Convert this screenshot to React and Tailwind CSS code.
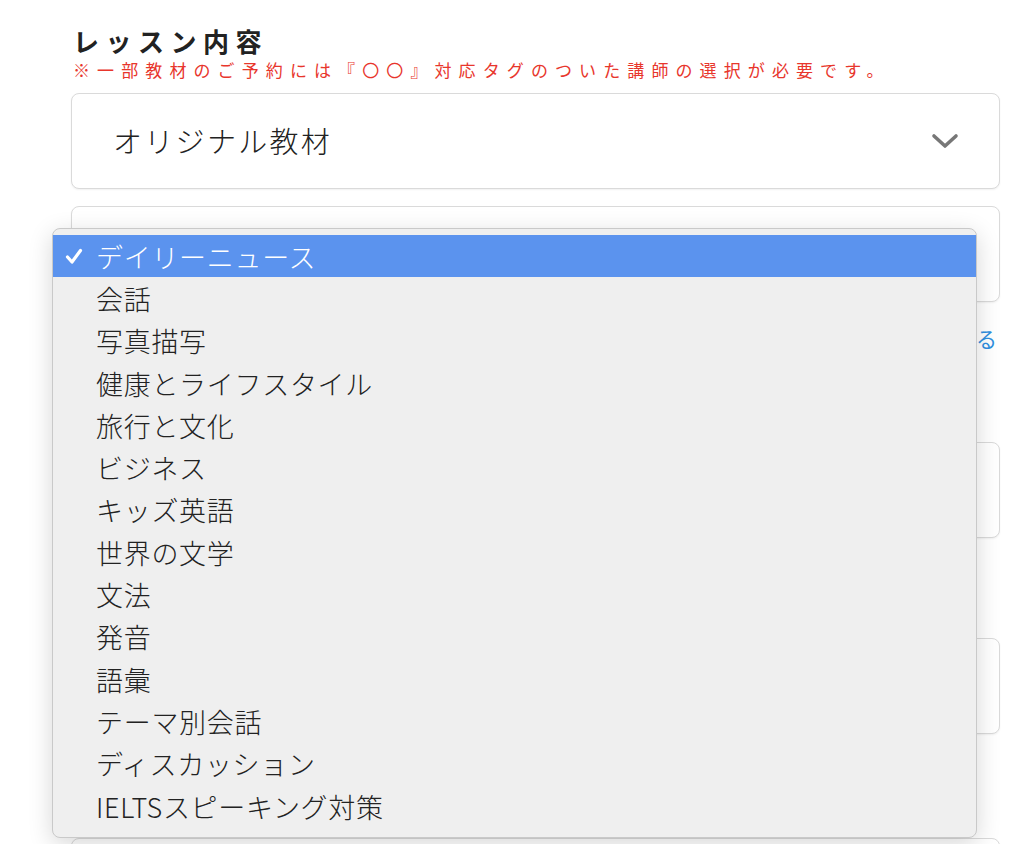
import React from 'react';

const items = [
  'デイリーニュース',
  '会話',
  '写真描写',
  '健康とライフスタイル',
  '旅行と文化',
  'ビジネス',
  'キッズ英語',
  '世界の文学',
  '文法',
  '発音',
  '語彙',
  'テーマ別会話',
  'ディスカッション',
  'IELTSスピーキング対策',
];

const font = { fontFamily: '"Noto Sans CJK JP", "Noto Sans", sans-serif' };

function Box({ className = '', children }) {
  return (
    <div className={`h-[96px] rounded-[8px] border border-[#dadada] bg-white shadow-[0_1px_2px_rgba(0,0,0,0.06)] ${className}`}>
      {children}
    </div>
  );
}

export default function App() {
  return (
    <div className="relative h-[844px] w-[1024px] overflow-hidden bg-white" style={font}>
      <div className="ml-[71px] w-[929px] pt-[23px]">
        {/* Section title */}
        <h2 className="ml-[2px] text-[26px] font-bold leading-[35px] tracking-[6.5px] text-[#222]">レッスン内容</h2>
        <p className="ml-[2px] text-[17px] leading-[24px] tracking-[7.1px] text-[#e8362c]">
          ※一部教材のご予約には『〇〇』対応タグのついた講師の選択が必要です。
        </p>

        {/* Material select */}
        <Box className="mt-[11px] flex items-center justify-between pl-[41px] pr-[40px]">
          <span className="text-[29px] font-light tracking-[2.3px] text-[#222]">オリジナル教材</span>
          <svg width="28" height="18" viewBox="0 0 28 18" fill="none">
            <path d="M3 4 L14 14 L25 4" stroke="#777" strokeWidth="3.6" strokeLinecap="round" strokeLinejoin="round" />
          </svg>
        </Box>

        <Box className="mt-[17px]" />

        <div className="mt-[22px] pr-[3px] text-right text-[21px] leading-[28px] text-[#2f8fe0]">教材の詳細を見る</div>

        <Box className="mt-[90px]" />
        <Box className="mt-[100px]" />
        <Box className="mt-[104px]" />
      </div>

      {/* Open dropdown menu */}
      <div className="absolute left-[52px] top-[228px] h-[610px] w-[925px] rounded-[8px] border border-[#c9c9c9] bg-[#efefef] pt-[6px] shadow-[0_6px_24px_rgba(0,0,0,0.16)]">
        {items.map((label, i) => (
          <div
            key={label}
            className={`relative flex h-[42.3px] items-center pl-[43px] text-[27px] font-light tracking-[0.7px] ${i === 0 ? 'bg-[#5b93ee] text-white' : 'text-[#222]'}`}
          >
            {i === 0 && (
              <svg className="absolute left-[12px] top-[13px]" width="18" height="17" viewBox="0 0 18 17" fill="none">
                <path d="M2.5 9 L7 14 L15.5 2.5" stroke="white" strokeWidth="3.2" strokeLinecap="round" strokeLinejoin="round" />
              </svg>
            )}
            <span className="leading-none">{label}</span>
          </div>
        ))}
      </div>
    </div>
  );
}
